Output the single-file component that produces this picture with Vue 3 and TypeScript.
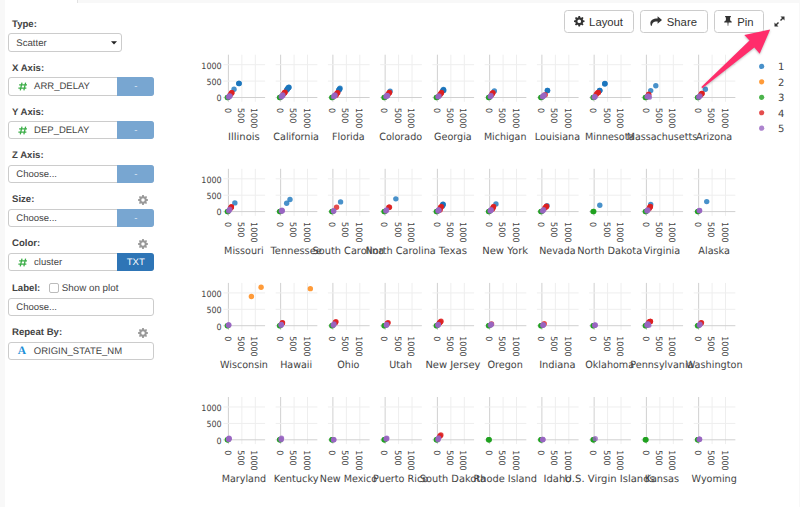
<script setup lang="ts">
type Point = [cluster: number, x: number, y: number]

interface Facet {
  name: string
  points: Point[]
}

interface Field {
  label: string
  value: string
  kind?: 'number' | 'text'
  action?: string
  strong?: boolean
  gear?: boolean
  checkbox?: string
}

const fields: Field[] = [
  { label: 'X Axis:', value: 'ARR_DELAY', kind: 'number', action: '-' },
  { label: 'Y Axis:', value: 'DEP_DELAY', kind: 'number', action: '-' },
  { label: 'Z Axis:', value: 'Choose...', action: '-' },
  { label: 'Size:', value: 'Choose...', action: '-', gear: true },
  { label: 'Color:', value: 'cluster', kind: 'number', action: 'TXT', strong: true, gear: true },
  { label: 'Label:', value: 'Choose...', checkbox: 'Show on plot' },
  { label: 'Repeat By:', value: 'ORIGIN_STATE_NM', kind: 'text', gear: true },
]

const fills = ['', '#1a76bd', '#ff8208', '#1ea01e', '#dd2020', '#9865c2']

const rows: Facet[][] = [
  [
    { name: 'Illinois', points: [[1, 400, 425], [1, 385, 430], [1, 210, 250], [4, 124, 148], [4, 124, 140], [4, 60, 75], [5, 0, 10], [5, 60, 50], [5, 30, 30]] },
    { name: 'California', points: [[1, 310, 315], [1, 290, 300], [1, 250, 260], [1, 220, 220], [4, 160, 160], [4, 150, 150], [4, 110, 110], [5, 20, 15], [5, 85, 75], [5, 50, 45]] },
    { name: 'Florida', points: [[1, 265, 280], [1, 240, 245], [1, 215, 220], [4, 185, 150], [4, 150, 130], [4, 110, 60], [5, 20, 20], [5, 80, 75], [5, 60, 45]] },
    { name: 'Colorado', points: [[1, 185, 190], [4, 165, 155], [4, 150, 145], [4, 100, 90], [5, 25, 25], [5, 90, 55], [5, 60, 60]] },
    { name: 'Georgia', points: [[1, 225, 245], [1, 235, 215], [1, 195, 210], [4, 155, 155], [4, 140, 130], [4, 90, 80], [5, 20, 20], [5, 60, 45]] },
    { name: 'Michigan', points: [[1, 175, 200], [4, 125, 150], [4, 100, 120], [4, 70, 80], [5, 20, 20], [5, 50, 60]] },
    { name: 'Louisiana', points: [[1, 210, 210], [1, 205, 215], [4, 125, 85], [5, 20, 20], [5, 50, 40], [5, 85, 75]] },
    { name: 'Minnesota', points: [[1, 400, 425], [1, 395, 415], [1, 210, 215], [1, 205, 210], [4, 160, 155], [4, 130, 145], [4, 75, 90], [5, 0, 10], [5, 35, 25]] },
    { name: 'Massachusetts', points: [[1, 350, 360], [1, 160, 210], [4, 87, 97], [4, 75, 80], [5, 25, 20], [5, 60, 50], [5, 110, 10]] },
    { name: 'Arizona', points: [[1, 250, 250], [4, 130, 125], [4, 110, 115], [4, 80, 80], [5, 0, 10], [5, 50, 45]] },
  ],
  [
    { name: 'Missouri', points: [[1, 240, 265], [4, 112, 145], [4, 110, 140], [4, 85, 105], [5, 10, 15], [5, 50, 70]] },
    { name: 'Tennessee', points: [[1, 347, 367], [1, 223, 255], [5, 25, 15], [5, 50, 40], [5, 55, 15]] },
    { name: 'South Carolina', points: [[1, 285, 296], [4, 136, 133], [5, 20, 20], [5, 30, 15]] },
    { name: 'North Carolina', points: [[1, 397, 388], [4, 160, 133], [4, 135, 130], [5, 25, 15], [5, 55, 50]] },
    { name: 'Texas', points: [[1, 210, 225], [1, 205, 210], [1, 185, 160], [4, 150, 155], [4, 115, 130], [4, 100, 50], [5, 20, 15], [5, 60, 40], [5, 40, 50]] },
    { name: 'New York', points: [[1, 235, 235], [4, 150, 160], [4, 125, 120], [4, 100, 70], [5, 15, 15], [5, 55, 60], [5, 40, 30]] },
    { name: 'Nevada', points: [[1, 190, 180], [4, 175, 165], [4, 160, 150], [4, 110, 110], [5, 20, 15], [5, 65, 55]] },
    { name: 'North Dakota', points: [[1, 210, 195]] },
    { name: 'Virginia', points: [[1, 160, 215], [4, 150, 155], [4, 135, 140], [4, 100, 90], [5, 20, 20], [5, 55, 50]] },
    { name: 'Alaska', points: [[1, 300, 305], [5, 25, 25], [5, 35, 35]] },
  ],
  [
    { name: 'Wisconsin', points: [[2, 855, 890], [2, 1215, 1170], [5, 0, 15], [5, 15, 25]] },
    { name: 'Hawaii', points: [[2, 1104, 1130], [4, 70, 92], [4, 55, 75], [5, 15, 15], [5, 25, 40]] },
    { name: 'Ohio', points: [[4, 112, 125], [4, 90, 90], [5, 10, 10], [5, 40, 50]] },
    { name: 'Utah', points: [[4, 110, 95], [4, 80, 65], [5, 45, 15], [5, 60, 35]] },
    { name: 'New Jersey', points: [[4, 136, 138], [4, 95, 100], [4, 65, 75], [5, 20, 15], [5, 35, 40]] },
    { name: 'Oregon', points: [[4, 70, 55], [5, 25, 10], [5, 65, 45]] },
    { name: 'Indiana', points: [[4, 87, 60], [5, 35, 15], [5, 55, 25]] },
    { name: 'Oklahoma', points: [[5, 20, 10], [5, 40, 25]] },
    { name: 'Pennsylvania', points: [[4, 150, 133], [4, 145, 130], [4, 85, 110], [5, 20, 15], [5, 50, 60], [5, 90, 10]] },
    { name: 'Washington', points: [[4, 105, 95], [4, 80, 75], [5, 25, 10], [5, 50, 45]] },
  ],
  [
    { name: 'Maryland', points: [[5, 5, 10], [5, 25, 45], [5, 15, 25]] },
    { name: 'Kentucky', points: [[5, 15, 5], [5, 30, 50]] },
    { name: 'New Mexico', points: [[5, 25, 5], [5, 30, 5]] },
    { name: 'Puerto Rico', points: [[5, 35, 25], [5, 60, 45]] },
    { name: 'South Dakota', points: [[4, 130, 145], [4, 85, 105], [5, 20, 5], [5, 45, 60]] },
    { name: 'Rhode Island', points: [] },
    { name: 'Idaho', points: [[5, 30, 5], [5, 35, 10]] },
    { name: 'U.S. Virgin Islands', points: [[5, 40, 35]] },
    { name: 'Kansas', points: [] },
    { name: 'Wyoming', points: [[5, 20, 10], [5, 35, 20]] },
  ],
]

const legend = [1, 2, 3, 4, 5]
const ticks = [0, 500, 1000]

const zeroX = (col: number) => 228.4 + col * 52.25
const zeroY = (row: number) => 97.5 + row * 114.1
const scaleX = (v: number) => v * 0.0269
const scaleY = (v: number) => v * -0.0328

// Clusters are painted in order; near neighbours of the same cluster are joined by a midpoint.
const markers = (facet: Facet): Point[] => {
  const pts: Point[] = [...facet.points, [3, -40, 0], [3, -15, 3]]
  pts.sort((a, b) => a[0] - b[0])
  const out: Point[] = []
  pts.forEach((p, i) => {
    out.push(p)
    const next = pts[i + 1]
    if (next && next[0] === p[0] && p[0] !== 2 && Math.abs(next[0 + 1] - p[1]) < 90) {
      out.push([p[0], (p[1] + next[1]) / 2, (p[2] + next[2]) / 2])
    }
  })
  return out
}

const advance: Record<string, number> = {
  A: 684, C: 698, D: 771, F: 575, G: 775, H: 751, I: 421, J: 455, K: 693, L: 557, M: 843, N: 748, O: 787,
  P: 603, R: 695, S: 684, T: 616, U: 732, V: 684, W: 989, Y: 615, a: 601, b: 623, c: 521, d: 623, e: 596,
  f: 352, g: 623, h: 633, i: 274, j: 344, k: 592, l: 274, m: 973, n: 633, o: 607, p: 623, r: 427, s: 521,
  t: 394, u: 633, v: 592, w: 818, x: 592, y: 592, z: 525, ' ': 352, '.': 364,
}
const titleSize = 9.65
const titleWidth = (name: string) =>
  [...name].reduce((sum, ch) => sum + (advance[ch] ?? 600), 0) * titleSize / 1000
const tickWidth = (t: number) => String(t).length * 5.1

const gearPath =
  'M6.8 0h2.4l.5 2.1 1.4.6L13 1.6 14.5 3.2 13.3 5l.6 1.3 2.1.5v2.4l-2.1.5-.6 1.4 1.2 1.8-1.6 1.6-1.8-1.2-1.4.6L9.200 16H6.800l-.5-2.100-1.400-.6-1.800 1.200L1.500 12.900l1.200-1.800-.6-1.400L0 9.200V6.800l2.100-.5L2.700 5 1.500 3.200 3.100 1.600l1.800 1.100 1.400-.6zM8 5.200a2.800 2.800 0 1 0 0 5.600 2.800 2.800 0 0 0 0-5.600z'
</script>

<template>
  <div class="page">
    <div class="tabs"><div class="tab"></div></div>
    <div class="panel">
      <aside class="sidebar">
        <section class="field">
          <div class="head"><b>Type:</b></div>
          <div class="box select">
            <span>Scatter</span>
            <svg class="caret" viewBox="0 0 6 4"><path d="M0 .3h6L3 3.500z" /></svg>
          </div>
        </section>
        <section v-for="f in fields" :key="f.label" class="field">
          <div class="head" :class="{ tall: f.checkbox }">
            <b>{{ f.label }}</b>
            <label v-if="f.checkbox" class="check"><i></i>{{ f.checkbox }}</label>
            <svg v-if="f.gear" class="gear" viewBox="0 0 16 16"><path :d="gearPath" fill-rule="evenodd" /></svg>
          </div>
          <div class="box">
            <svg v-if="f.kind === 'number'" class="hash" viewBox="0 0 10 9">
              <path d="M4.200.4 2.400 8.600M8 .4 6.200 8.600M1.200 2.900h8.400M.4 6.100h8.400" />
            </svg>
            <span v-else-if="f.kind === 'text'" class="letter">A</span>
            <span class="value">{{ f.value }}</span>
            <span v-if="f.action" class="action" :class="{ strong: f.strong }">{{ f.action }}</span>
          </div>
        </section>
      </aside>

      <main class="main">
        <div class="toolbar">
          <button class="btn layout">
            <svg viewBox="0 0 16 16"><path :d="gearPath" fill-rule="evenodd" /></svg>Layout
          </button>
          <button class="btn share">
            <svg class="wide" viewBox="0 0 12 10">
              <path d="M7.600 0 12 3.700 7.600 7.400V5.200C4.200 5 2.200 5.700 1.900 9.600H.9C-.8 5 1.700 2.200 7.600 2.200z" />
            </svg>Share
          </button>
          <button class="btn pin">
            <svg class="thin" viewBox="0 0 8 11">
              <path d="M1 0h6v1.300H6.200v3.300C7.400 5 8 5.800 8 6.900H4.600L4.200 10.500H3.800L3.400 6.900H0C0 5.800.6 5 1.800 4.600V1.300H1z" />
            </svg>Pin
          </button>
          <svg class="expand" viewBox="0 0 11 11">
            <path d="M6.500 .6h4v4L9 3.100 7 5.100 6 4.100 8 2.100zM4.500 10.400h-4v-4L2 7.900 4 5.900 5 6.900 3 8.900z" />
          </svg>
        </div>

        <svg class="chart" viewBox="160 40 639 467">
          <g v-for="(row, r) in rows" :key="r">
            <g v-for="(facet, c) in row" :key="facet.name" :transform="`translate(${zeroX(c)} ${zeroY(r)})`">
              <g class="grid">
                <path v-for="t in ticks" :key="'v' + t" :class="{ zero: t === 0 }" :d="`M${scaleX(t)} -42.800V4.300`" />
                <path v-for="t in ticks" :key="'h' + t" :class="{ zero: t === 0 }" :d="`M-5 ${scaleY(t)}H36.700`" />
              </g>
              <circle
                v-for="(p, i) in markers(facet)" :key="i" class="dot"
                :cx="scaleX(p[1])" :cy="scaleY(p[2])" r="2.700" :fill="fills[p[0]]"
              />
              <text
                v-for="t in ticks" :key="'x' + t" class="tick" :textLength="tickWidth(t)" lengthAdjust="spacingAndGlyphs"
                :transform="`translate(${scaleX(t) - 3.900} 10.500) rotate(90)`"
              >{{ t }}</text>
              <text
                class="title" text-anchor="middle" x="15.500" y="42.600"
                :textLength="titleWidth(facet.name)" lengthAdjust="spacingAndGlyphs"
              >{{ facet.name }}</text>
            </g>
            <text
              v-for="t in ticks" :key="t" class="tick" text-anchor="end" :textLength="tickWidth(t)" lengthAdjust="spacingAndGlyphs"
              x="221.700" :y="zeroY(r) + scaleY(t) + 3.800"
            >{{ t }}</text>
          </g>
          <g v-for="(n, i) in legend" :key="n" :transform="`translate(761.700 ${66.400 + i * 15.450})`">
            <circle class="dot" r="2.600" :fill="fills[n]" />
            <text class="title" x="16.300" y="4">{{ n }}</text>
          </g>
        </svg>
      </main>
    </div>

    <svg class="pointer" viewBox="0 0 74 64">
      <path d="M1.800 57.500 49.500 11.500 44.300 6 70.200.500 59.700 24.700 54.300 18.500 3 58.700C2 59.500 1.100 58.300 1.800 57.500z" />
    </svg>
  </div>
</template>

<style>
body { background: #f8f8f8; overflow: hidden; }
</style>

<style scoped>
.page {
  position: relative;
  width: 800px;
  height: 507px;
  overflow: hidden;
  background: #f8f8f8;
  color: #444;
  font: 9.600px "Liberation Sans", Arial, sans-serif;
  text-rendering: geometricPrecision;
}
.tabs { height: 3px; padding-left: 5px; }
.tab { width: 72px; height: 3px; background: #fff; border-right: 1px solid #e2e2e2; }
.panel { display: flex; width: 794px; height: 504px; margin-left: 5px; background: #fff; }
.sidebar { width: 155px; padding: 11px 0 0 3.300px; box-sizing: border-box; }
.field { width: 146px; margin-bottom: 6.050px; }
.head { display: flex; align-items: center; box-sizing: border-box; height: 19.300px; padding: 1.500px 6px 0 3.700px; }
.head.tall { height: 20.600px; }
.head b { color: #444; }
.gear { width: 10px; height: 10px; margin-left: auto; fill: #999; }
.check { display: flex; align-items: center; margin-left: 9px; font-size: 9.800px; }
.check i { width: 8px; height: 8px; margin-right: 2.500px; border: 1px solid #bbb; border-radius: 2px; }
.box {
  display: flex;
  align-items: center;
  box-sizing: border-box;
  height: 18.500px;
  padding: 1px 0 0 7px;
  border: 1px solid #ccc;
  border-radius: 3px;
  background: #fff;
  color: #444;
}
.select { width: 114px; justify-content: space-between; padding-right: 4px; }
.caret { width: 6px; height: 4px; fill: #222; }
.hash { width: 9.500px; height: 9px; margin: 0 7px 0 1.300px; fill: none; stroke: #3cae48; stroke-width: 1.350; }
.letter { width: 9px; margin: 0 7px 0 1.500px; color: #1b8fd8; font: bold 11.500px/12px "Liberation Serif", serif; }
.value { font-size: 9.500px; }
.action {
  width: 37px;
  height: 18.500px;
  margin: -2px -1px -1px auto;
  border-radius: 0 3px 3px 0;
  background: #78a6d1;
  color: #dce8f3;
  line-height: 19.500px;
  text-align: center;
}
.action.strong { background: #2e75b6; color: #fff; }
.main { width: 639px; }
.toolbar { display: flex; align-items: center; height: 37px; padding-left: 404px; box-sizing: border-box; }
.btn {
  display: flex;
  align-items: center;
  box-sizing: border-box;
  height: 23px;
  margin: 0 6.400px 0 0;
  padding: 0 0 0 9px;
  border: 1px solid #ccc;
  border-radius: 3.500px;
  background: #fff;
  color: #333;
  font: 11.300px "Liberation Sans", Arial, sans-serif;
}
.btn svg { width: 10.500px; height: 10.500px; margin-right: 4.600px; fill: #333; flex: none; }
.btn svg.wide { width: 12px; }
.btn svg.thin { width: 8px; margin-right: 5px; }
.layout { width: 69.800px; }
.share { width: 67.600px; }
.pin { width: 49.700px; margin-right: 9.700px; }
.expand { width: 11px; height: 11px; fill: #333; }
.chart { display: block; width: 639px; height: 467px; }
.grid path { stroke: #eee; stroke-width: 1; }
.grid path.zero { stroke: #d0d0d0; }
.dot { opacity: 0.8; }
.tick, .title { fill: #444; font-family: "DejaVu Sans", Verdana, sans-serif; }
.tick { font-size: 8.700px; }
.title { font-size: 10px; }
.pointer { position: absolute; left: 700px; top: 29px; width: 74px; height: 64px; filter: drop-shadow(0 1px 1px rgba(0, 0, 0, 0.25)); }
.pointer path { fill: #ff2d6b; }
</style>
